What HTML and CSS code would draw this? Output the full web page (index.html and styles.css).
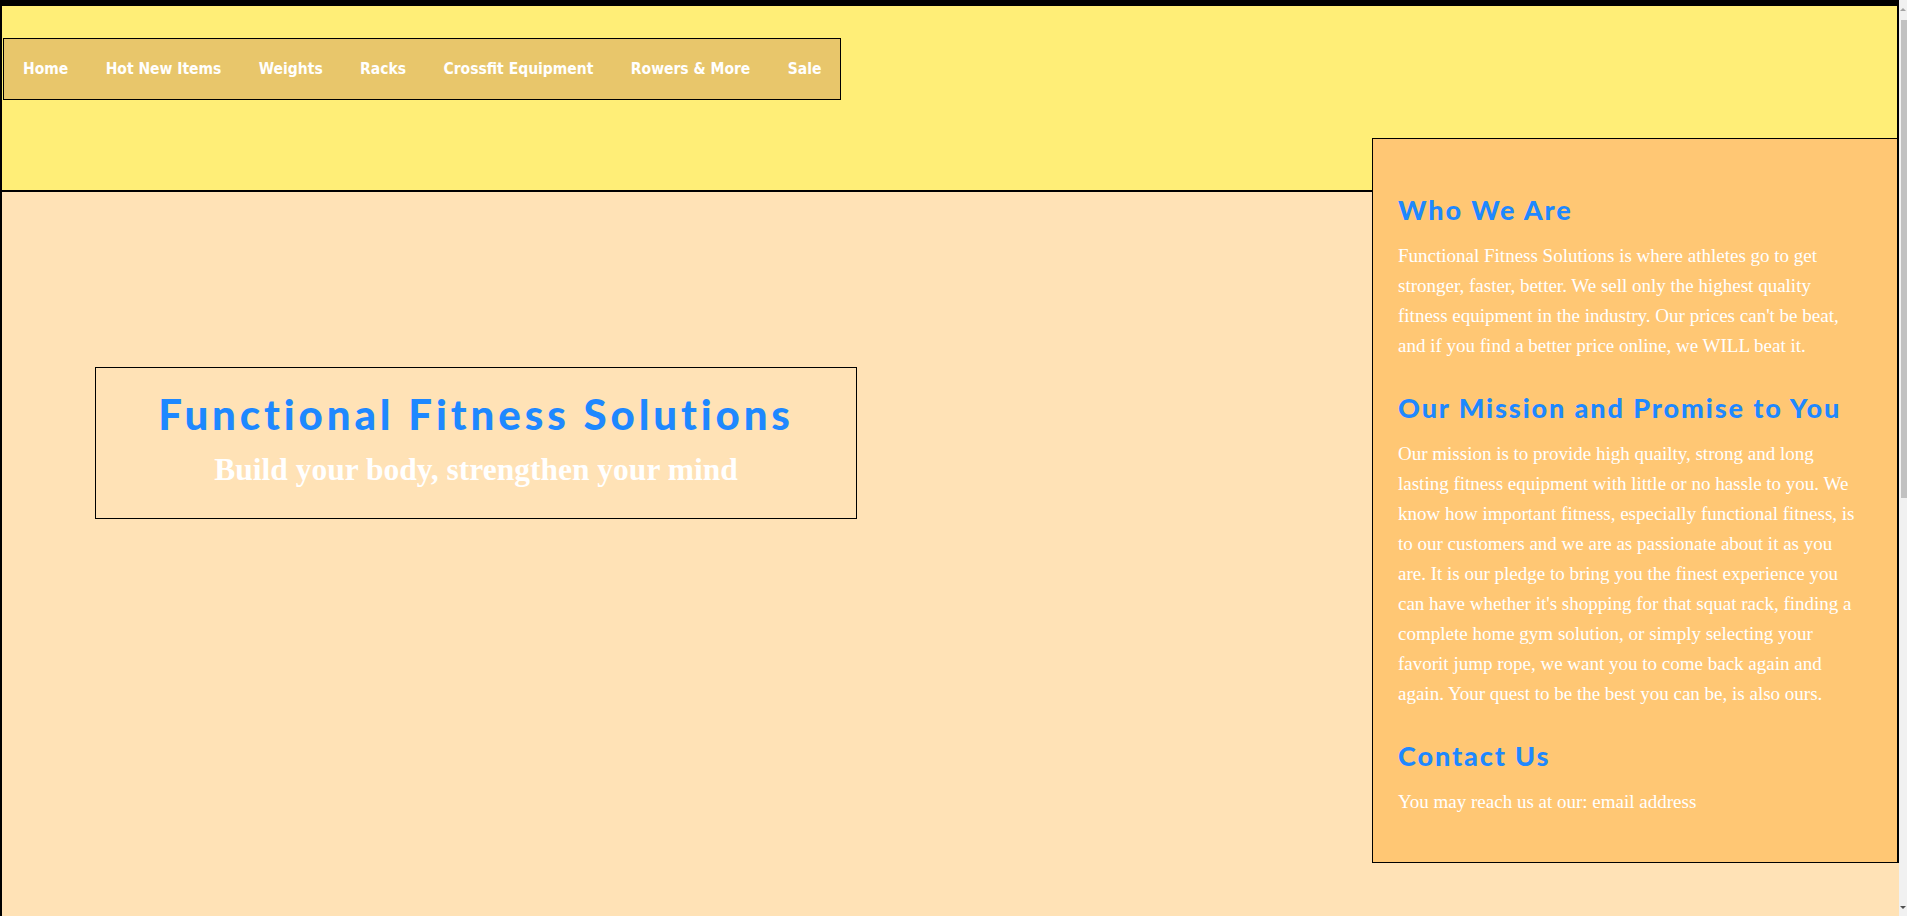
FILE: index.html
```html
<!DOCTYPE html>
<html lang="en">
<head>
<meta charset="utf-8">
<title>Functional Fitness Solutions</title>
<link rel="stylesheet" href="styles.css">
</head>
<body>
<div class="viewport">
  <div class="page">
    <header class="site-header">
      <nav class="main-nav">
        <a href="#" class="nav-link">Home</a>
        <a href="#" class="nav-link">Hot New Items</a>
        <a href="#" class="nav-link">Weights</a>
        <a href="#" class="nav-link">Racks</a>
        <a href="#" class="nav-link">Crossfit Equipment</a>
        <a href="#" class="nav-link">Rowers &amp; More</a>
        <a href="#" class="nav-link">Sale</a>
      </nav>
    </header>
    <main class="content">
      <section class="hero">
        <h1 class="hero-title">Functional Fitness Solutions</h1>
        <p class="hero-sub">Build your body, strengthen your mind</p>
      </section>
    </main>
    <aside class="sidebar">
      <h2 class="side-title">Who We Are</h2>
      <p class="side-text">Functional Fitness Solutions is where athletes go to get stronger, faster, better. We sell only the highest quality fitness equipment in the industry. Our prices can't be beat, and if you find a better price online, we WILL beat it.</p>
      <h2 class="side-title">Our Mission and Promise to You</h2>
      <p class="side-text">Our mission is to provide high quailty, strong and long lasting fitness equipment with little or no hassle to you. We know how important fitness, especially functional fitness, is to our customers and we are as passionate about it as you are. It is our pledge to bring you the finest experience you can have whether it's shopping for that squat rack, finding a complete home gym solution, or simply selecting your favorit jump rope, we want you to come back again and again. Your quest to be the best you can be, is also ours.</p>
      <h2 class="side-title">Contact Us</h2>
      <p class="side-text">You may reach us at our: email address</p>
    </aside>
  </div>
  <div class="scrollbar">
    <span class="sb-arrow sb-up"></span>
    <span class="sb-thumb"></span>
    <span class="sb-spacer"></span>
    <span class="sb-arrow sb-down"></span>
  </div>
</div>
</body>
</html>
```
FILE: styles.css
```css
html, body {
  margin: 0;
  padding: 0;
  height: 100%;
  overflow: hidden;
}

body {
  background: #ffe2b6;
}

.viewport {
  display: flex;
  height: 916px;
  overflow: hidden;
}

.page {
  flex: 1;
  position: relative;
  background: #ffe2b6;
  border-left: 2px solid #000;
  overflow: hidden;
}

.site-header {
  background: #ffee77;
  border-top: 6px solid #000;
  border-right: 2px solid #000;
  border-bottom: 2px solid #000;
  box-sizing: border-box;
  height: 192px;
  padding: 32px 0 0 1px;
}

.main-nav {
  display: inline-flex;
  align-items: center;
  height: 62px;
  box-sizing: border-box;
  background: #e8c66b;
  border: 1px solid #000;
}

.nav-link {
  font-family: "DejaVu Sans", sans-serif;
  font-stretch: condensed;
  font-weight: 700;
  font-size: 15.5px;
  letter-spacing: 0;
  color: #fff;
  text-decoration: none;
  padding: 0 18.7px;
  line-height: 62px;
}

.nav-link:first-child {
  padding-left: 19px;
}

.content {
  padding: 175px 0 0 93px;
}

.hero {
  width: 762px;
  box-sizing: border-box;
  border: 1px solid #000;
  padding: 21px 0 30px;
  text-align: center;
}

.hero-title {
  margin: 0;
  font-family: "Lato", "DejaVu Sans", sans-serif;
  font-weight: 900;
  font-size: 42px;
  line-height: 50px;
  letter-spacing: 3.9px;
  color: #1e88ff;
}

.hero-sub {
  margin: 13px 0 0;
  font-family: "Liberation Serif", "DejaVu Serif", serif;
  font-weight: 700;
  font-size: 31.5px;
  line-height: 36px;
  color: #fff;
}

.sidebar {
  position: absolute;
  top: 138px;
  right: 0;
  width: 527px;
  box-sizing: border-box;
  background: #ffc774;
  border: 1px solid #000;
  border-right-width: 2px;
  padding: 24px 39px 45px 25px;
}

.side-title {
  margin: 31px 0 15px;
  font-family: "Lato", "DejaVu Sans", sans-serif;
  font-weight: 900;
  font-size: 27px;
  line-height: 32px;
  letter-spacing: 1.9px;
  color: #1e88ff;
}

.side-text {
  margin: 0;
  font-family: "Liberation Serif", "DejaVu Serif", serif;
  font-size: 19px;
  line-height: 30px;
  color: #fff;
}

.scrollbar {
  width: 8px;
  background: #f1f1f1;
  display: flex;
  flex-direction: column;
  align-items: flex-end;
}

.sb-arrow {
  height: 18px;
  width: 8px;
  display: flex;
  justify-content: center;
  align-items: center;
}

.sb-up::before,
.sb-down::before {
  content: "";
  width: 0;
  height: 0;
  border-left: 3px solid transparent;
  border-right: 3px solid transparent;
}

.sb-up::before {
  border-bottom: 3px solid #a3a3a3;
}

.sb-down::before {
  border-top: 3px solid #505050;
}

.sb-thumb {
  width: 6px;
  height: 478px;
  margin-top: 2px;
  background: #c1c1c1;
}

.sb-spacer {
  flex: 1;
}
```
